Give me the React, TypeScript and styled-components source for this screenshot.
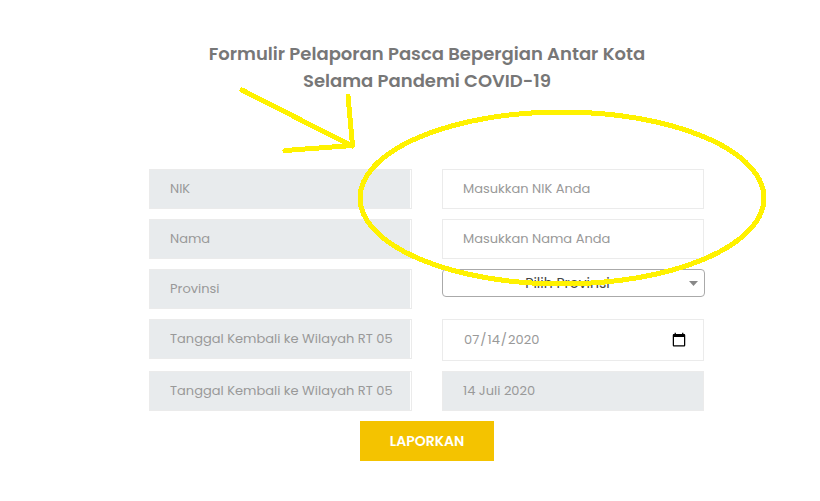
import React from "react";
import styled, { createGlobalStyle, css } from "styled-components";

const GlobalStyle = createGlobalStyle`
  *, *::before, *::after { box-sizing: border-box; }
  body {
    margin: 0;
    background: #fff;
    color: #777;
    font-family: Poppins, Inter, "Open Sans", sans-serif;
    font-size: 13px;
  }
`;

const Page = styled.main`
  display: flex;
  justify-content: center;
  padding: 40px 16px 40px 50px;
`;

const Report = styled.form`
  position: relative;
  width: 100%;
  max-width: 556px;
`;

const Title = styled.h1`
  margin: 0 0 75px;
  color: #777;
  font-size: 18px;
  font-weight: 600;
  line-height: 27px;
  text-align: center;
`;

const Fields = styled.div`
  display: grid;
  gap: 10px;
`;

const Row = styled.div`
  display: grid;
  grid-template-columns: 1fr 1fr;
  align-items: start;
  column-gap: 30px;
`;

const box = css`
  width: 100%;
  height: 40px;
  padding: 0 20px;
  border: 1px solid #ebebeb;
  color: #999;
  font-family: inherit;
  font-size: 13px;
  line-height: 38px;
`;

const Label = styled.label`
  ${box}
  display: block;
  padding-right: 0;
  background: #e8ebed;
  box-shadow: inset -1px 0 #fff;
  white-space: nowrap;
`;

const Control = styled.div`
  padding-right: 1px;
`;

const Input = styled.input`
  ${box}
  display: block;
  margin: 0;
  border-radius: 0;
  outline: 0;
  background: ${(p) => (p.readOnly ? "#e8ebed" : "#fff")};

  &::placeholder { color: #999; opacity: 1; }
  &[type="date"] { height: 42px; }
  &[type="date"]::-webkit-calendar-picker-indicator {
    width: 16px;
    height: 16px;
    margin-right: -6px;
  }
`;

const SelectBox = styled.div`
  display: grid;
  align-items: center;

  > * { grid-area: 1 / 1; }
`;

const Select = styled.select`
  appearance: none;
  width: 100%;
  height: 28px;
  margin: 0;
  padding: 0 20px 0 8px;
  border: 1px solid #aaa;
  border-radius: 4px;
  background: #fff;
  color: #444;
  font-family: inherit;
  font-size: 14px;
  text-align: center;
  text-align-last: center;
`;

const Caret = styled.svg`
  justify-self: end;
  margin-right: 7px;
  pointer-events: none;
`;

const Submit = styled.button`
  display: block;
  height: 40px;
  margin: 10px auto 0;
  padding: 0 30px;
  border: 0;
  background: #f4c300;
  color: #fff;
  font-family: inherit;
  font-size: 14px;
  font-weight: 600;
`;

const Markup = styled.svg`
  position: absolute;
  top: 40px;
  left: 80px;
  overflow: visible;
  pointer-events: none;
`;

export default function App() {
  return (
    <>
      <GlobalStyle />
      <Page>
        <Report onSubmit={(e: React.FormEvent) => e.preventDefault()}>
          <Title>
            Formulir Pelaporan Pasca Bepergian Antar Kota
            <br />
            Selama Pandemi COVID-19
          </Title>
          <Fields>
            <Row>
              <Label htmlFor="nik">NIK</Label>
              <Control>
                <Input id="nik" placeholder="Masukkan NIK Anda" />
              </Control>
            </Row>
            <Row>
              <Label htmlFor="nama">Nama</Label>
              <Control>
                <Input id="nama" placeholder="Masukkan Nama Anda" />
              </Control>
            </Row>
            <Row>
              <Label htmlFor="provinsi">Provinsi</Label>
              <SelectBox>
                <Select id="provinsi">
                  <option>Pilih Provinsi</option>
                </Select>
                <Caret width="9" height="5" viewBox="0 0 9 5" aria-hidden="true">
                  <path d="M0 0h9L4.5 5z" fill="#888" />
                </Caret>
              </SelectBox>
            </Row>
            <Row>
              <Label htmlFor="kembali">Tanggal Kembali ke Wilayah RT 05</Label>
              <Control>
                <Input id="kembali" type="date" defaultValue="2020-07-14" />
              </Control>
            </Row>
            <Row>
              <Label htmlFor="tanggal">Tanggal Kembali ke Wilayah RT 05</Label>
              <Control>
                <Input id="tanggal" readOnly value="14 Juli 2020" />
              </Control>
            </Row>
          </Fields>
          <Submit type="submit">LAPORKAN</Submit>
          <Markup
            width="540"
            height="210"
            viewBox="229 80 540 210"
            fill="none"
            stroke="#fff200"
            strokeWidth="5"
            strokeLinecap="round"
            strokeLinejoin="round"
            shapeRendering="crispEdges"
            aria-hidden="true"
          >
            <path d="M242 90L352 146M348 96L352.500 145.500L285 150.500" />
            <ellipse cx="562" cy="198" rx="202" ry="86" />
          </Markup>
        </Report>
      </Page>
    </>
  );
}
